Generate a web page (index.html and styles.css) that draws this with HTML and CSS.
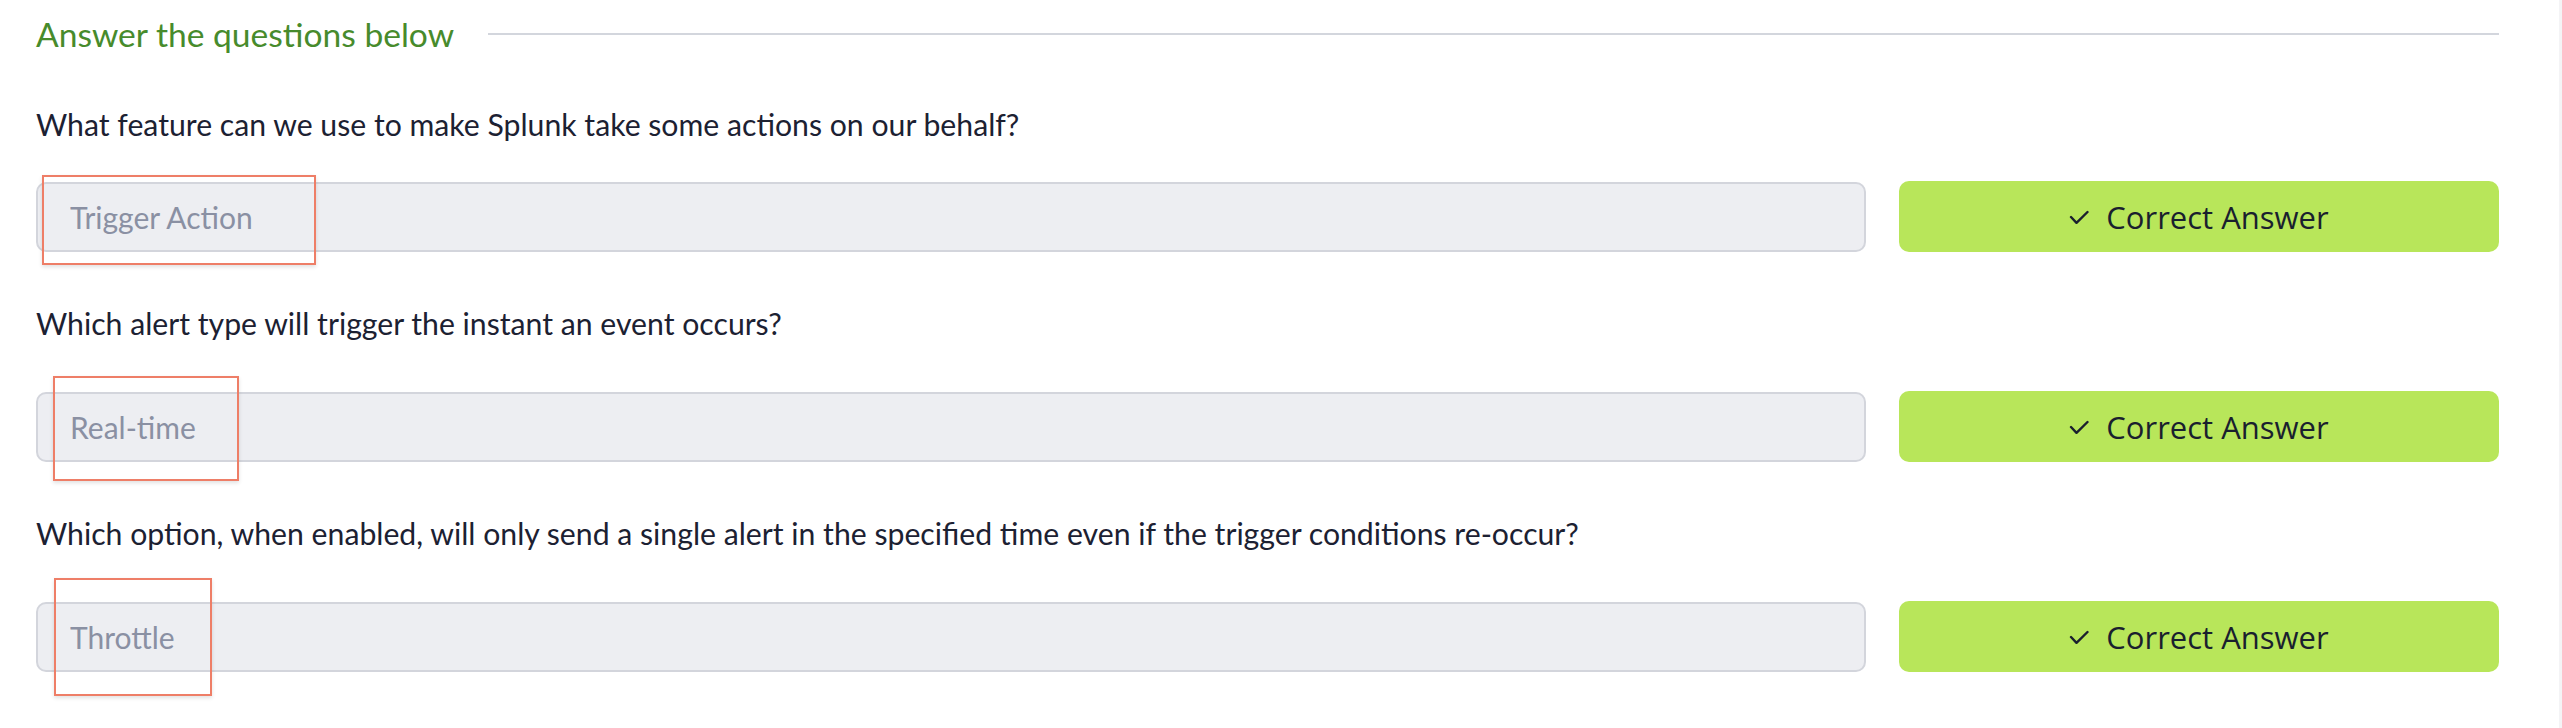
FILE: index.html
```html
<!DOCTYPE html>
<html lang="en">
<head>
<meta charset="utf-8">
<title>Answer the questions below</title>
<link rel="stylesheet" href="styles.css">
</head>
<body>
<main class="panel">
  <div class="heading-row">
    <h2 class="heading">Answer the questions below</h2>
    <div class="rule"></div>
  </div>

  <section class="task">
    <p class="question">What feature can we use to make Splunk take some actions on our behalf?</p>
    <div class="answer-row">
      <div class="field">
        <input class="answer" type="text" readonly value="Trigger Action">
        <span class="mark mark-1"></span>
      </div>
      <button class="submit" type="button">
        <svg class="check" viewBox="0 0 20 15" width="20" height="15"><polyline points="2,7 7.5,12.8 18.5,2" fill="none" stroke="#1a1f2e" stroke-width="2.4" stroke-linecap="round" stroke-linejoin="round"/></svg>
        <span>Correct Answer</span>
      </button>
    </div>
  </section>

  <section class="task">
    <p class="question">Which alert type will trigger the instant an event occurs?</p>
    <div class="answer-row">
      <div class="field">
        <input class="answer" type="text" readonly value="Real-time">
        <span class="mark mark-2"></span>
      </div>
      <button class="submit" type="button">
        <svg class="check" viewBox="0 0 20 15" width="20" height="15"><polyline points="2,7 7.5,12.8 18.5,2" fill="none" stroke="#1a1f2e" stroke-width="2.4" stroke-linecap="round" stroke-linejoin="round"/></svg>
        <span>Correct Answer</span>
      </button>
    </div>
  </section>

  <section class="task">
    <p class="question">Which option, when enabled, will only send a single alert in the specified time even if the trigger conditions re-occur?</p>
    <div class="answer-row">
      <div class="field">
        <input class="answer" type="text" readonly value="Throttle">
        <span class="mark mark-3"></span>
      </div>
      <button class="submit" type="button">
        <svg class="check" viewBox="0 0 20 15" width="20" height="15"><polyline points="2,7 7.5,12.8 18.5,2" fill="none" stroke="#1a1f2e" stroke-width="2.4" stroke-linecap="round" stroke-linejoin="round"/></svg>
        <span>Correct Answer</span>
      </button>
    </div>
  </section>
</main>
</body>
</html>
```

FILE: styles.css
```css
html, body {
  margin: 0;
  padding: 0;
  background: #ffffff;
}

body {
  font-family: Lato, "Liberation Sans", sans-serif;
  border-right: 3px solid #f4f4f6;
  min-height: 728px;
  box-sizing: border-box;
}

.panel {
  padding: 12px 60px 0 36px;
}

.heading-row {
  display: flex;
  align-items: center;
  gap: 34px;
  height: 44px;
}

.heading {
  margin: 0;
  font-family: Lato, sans-serif;
  font-weight: 400;
  font-size: 33.6px;
  line-height: 44px;
  color: #478b2c;
  white-space: nowrap;
}

.rule {
  flex: 1;
  height: 2px;
  background: #d3d6dd;
}

.task {
  display: flex;
  flex-direction: column;
}

.question {
  margin: 48px 0 0;
  font-family: Lato, sans-serif;
  font-size: 30.2px;
  line-height: 40px;
  color: #1c2132;
}

.task + .task .question {
  margin-top: 51px;
}

.answer-row {
  display: flex;
  align-items: stretch;
  gap: 33px;
  margin-top: 37px;
  height: 71px;
}

.task + .task .answer-row {
  margin-top: 48px;
}

.field {
  position: relative;
  flex: 1;
  display: flex;
}

.answer {
  flex: 1;
  margin: 0;
  box-sizing: border-box;
  height: 70px;
  margin-top: 1px;
  padding: 0 0 0 32px;
  border: 2px solid #d3d5dc;
  border-radius: 10px;
  background: #edeef2;
  font-family: Lato, sans-serif;
  font-size: 30px;
  color: #8a90a3;
  outline: none;
}

.mark {
  position: absolute;
  border: 2px solid #ee7e67;
  box-shadow: 0 2px 4px rgba(0, 0, 0, 0.12);
  pointer-events: none;
}

.mark-1 {
  left: 6px;
  top: -6px;
  width: 270px;
  height: 86px;
}

.mark-2 {
  left: 17px;
  top: -15px;
  width: 182px;
  height: 101px;
}

.mark-3 {
  left: 18px;
  top: -23px;
  width: 154px;
  height: 114px;
}

.submit {
  width: 600px;
  flex: none;
  display: flex;
  align-items: center;
  justify-content: center;
  gap: 17px;
  border: none;
  border-radius: 10px;
  background: #b8e65a;
  font-family: "Open Sans", sans-serif;
  font-weight: 500;
  font-size: 31px;
  color: #1a1f2e;
  padding: 0;
  cursor: pointer;
}

.check {
  flex: none;
  margin-top: 2px;
}
```
